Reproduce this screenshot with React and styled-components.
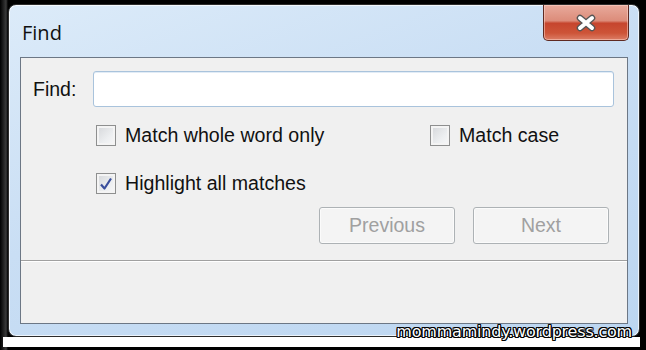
import React from "react";
import styled, { createGlobalStyle } from "styled-components";

const GlobalStyle = createGlobalStyle`
  html, body {
    margin: 0;
    padding: 0;
    background: #000;
  }
  body {
    font-family: "Liberation Sans", Arial, sans-serif;
  }
`;

const CloseIcon = () => (
  <svg width="24" height="18" viewBox="0 0 24 18">
    <path
      d="M6 4 L18 14 M18 4 L6 14"
      stroke="#555"
      strokeWidth="6.6"
      strokeLinecap="round"
    />
    <path
      d="M6 4 L18 14 M18 4 L6 14"
      stroke="#ffffff"
      strokeWidth="4"
      strokeLinecap="round"
    />
  </svg>
);

const Check = () => (
  <svg width="14" height="14" viewBox="0 0 14 14">
    <path
      d="M2 7.5 L5.5 11.5 L12 1.5"
      fill="none"
      stroke="#3a4f9c"
      strokeWidth="2.2"
      strokeLinejoin="round"
    />
  </svg>
);

const App = () => {
  return (
    <>
      <GlobalStyle />
      <Page>
        <Window>
          <TitleBar>
            <Title>Find</Title>
            <CloseButton aria-label="Close">
              <CloseIcon />
            </CloseButton>
          </TitleBar>
          <Panel>
            <Content>
              <FindRow>
                <Label>Find:</Label>
                <Input type="text" />
              </FindRow>
              <Options>
                <Option>
                  <Box />
                  Match whole word only
                </Option>
                <Option>
                  <Box />
                  Match case
                </Option>
                <Option>
                  <Box>
                    <Check />
                  </Box>
                  Highlight all matches
                </Option>
              </Options>
              <ButtonBox>
                <Button disabled>Previous</Button>
                <Button disabled>Next</Button>
              </ButtonBox>
            </Content>
            <Separator />
            <Status />
          </Panel>
        </Window>
        <BottomStrip />
        <Watermark>mommamindy.wordpress.com</Watermark>
      </Page>
    </>
  );
};
export default App;

const Page = styled.div`
  position: relative;
  width: 646px;
  height: 350px;
  overflow: hidden;
  display: flex;
  flex-direction: column;
  background: linear-gradient(90deg, #000 0, #3a3a3a 6px, #000 8px);
`;

const Window = styled.div`
  margin: 4px 0 0 8px;
  width: 632px;
  height: 333px;
  box-sizing: border-box;
  border: 1px solid #2c2c2c;
  border-radius: 8px;
  padding: 0 11px 12px 11px;
  display: flex;
  flex-direction: column;
  background: linear-gradient(160deg, #dcebf9 0%, #c9def4 45%, #bcd6f1 100%);
  box-shadow: inset 0 0 0 1px rgba(255, 255, 255, 0.7);
`;

const TitleBar = styled.div`
  height: 52px;
  display: flex;
  justify-content: space-between;
  align-items: flex-start;
`;

const Title = styled.div`
  margin: 14px 0 0 2px;
  font-family: "Open Sans", "Liberation Sans", sans-serif;
  font-size: 20px;
  color: #101010;
`;

const CloseButton = styled.div`
  margin-right: -1px;
  width: 86px;
  height: 36px;
  box-sizing: border-box;
  border: 1px solid #5f2a22;
  border-top: none;
  border-radius: 0 0 5px 5px;
  display: flex;
  align-items: center;
  justify-content: center;
  background: linear-gradient(
    180deg,
    #e8aa9c 0%,
    #dc8c7a 45%,
    #c6452e 52%,
    #cd5438 80%,
    #dc7e66 100%
  );
  box-shadow: inset 0 0 0 1px rgba(255, 220, 210, 0.5);
`;

const Panel = styled.div`
  flex: 1;
  display: flex;
  flex-direction: column;
  border: 1px solid #6c7785;
  background: #f0f0f0;
`;

const Content = styled.div`
  padding: 13px 13px 0 12px;
  display: flex;
  flex-direction: column;
`;

const FindRow = styled.div`
  display: flex;
  align-items: center;
`;

const Label = styled.div`
  width: 60px;
  font-size: 19.5px;
  color: #111;
`;

const Input = styled.input`
  flex: 1;
  height: 36px;
  box-sizing: border-box;
  border: 1px solid #a9c3dc;
  border-radius: 3px;
  background: #fff;
  outline: none;
  box-shadow: inset 0 1px 0 #e2ecf6;
`;

const Options = styled.div`
  margin-top: 18px;
  padding-left: 63px;
  display: grid;
  grid-template-columns: 334px auto;
  row-gap: 27px;
`;

const Option = styled.label`
  display: flex;
  align-items: center;
  gap: 9px;
  height: 21px;
  font-size: 19.6px;
  color: #111;
  white-space: nowrap;
`;

const Box = styled.span`
  width: 20px;
  height: 21px;
  box-sizing: border-box;
  border: 1px solid #8e8f8f;
  display: flex;
  align-items: center;
  justify-content: center;
  background: linear-gradient(135deg, #d4d6d9 0%, #eceef0 60%, #f8f8f9 100%);
  box-shadow: inset 0 0 0 2px #f4f4f4;
`;

const ButtonBox = styled.div`
  margin-top: 13px;
  padding-right: 5px;
  display: flex;
  justify-content: flex-end;
  gap: 18px;
`;

const Button = styled.button`
  width: 136px;
  height: 37px;
  box-sizing: border-box;
  border: 1px solid #adb2b5;
  border-radius: 3px;
  background: #f4f4f4;
  font-family: "Liberation Sans", Arial, sans-serif;
  font-size: 19.5px;
  color: #a0a0a0;
  box-shadow: inset 0 0 0 1px #fbfbfb;
`;

const Separator = styled.div`
  margin-top: 16px;
  height: 1px;
  background: #a0a0a0;
  border-bottom: 1px solid #ffffff;
`;

const Status = styled.div`
  flex: 1;
`;

const BottomStrip = styled.div`
  margin-left: 3px;
  width: 637px;
  height: 10px;
  background: #fff;
`;

const Watermark = styled.div`
  position: absolute;
  right: 14px;
  bottom: 9px;
  font-family: "DejaVu Sans", sans-serif;
  font-size: 16px;
  letter-spacing: -0.2px;
  color: #fff;
  text-shadow: 1px 0 0 #000, -1px 0 0 #000, 0 1px 0 #000, 0 -1px 0 #000,
    1px 1px 0 #000, -1px -1px 0 #000, 1px -1px 0 #000, -1px 1px 0 #000;
`;
